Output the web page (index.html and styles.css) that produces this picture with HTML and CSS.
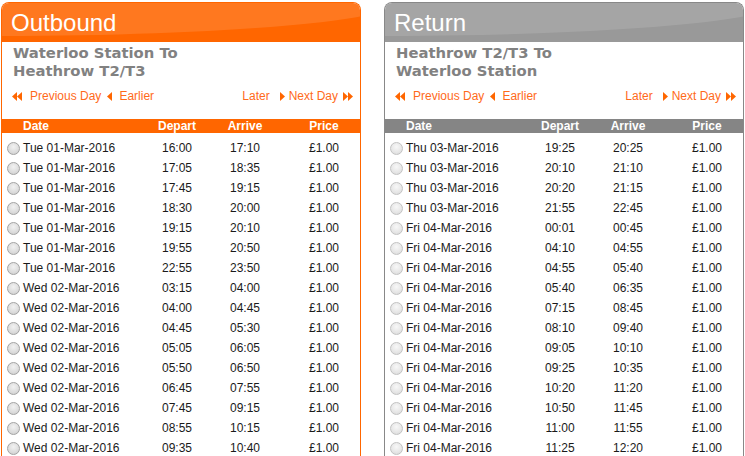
FILE: index.html
```html
<!DOCTYPE html>
<html>
<head>
<meta charset="utf-8">
<link rel="stylesheet" href="styles.css">
</head>
<body>
<div class="page">
  <section class="panel panel-out">
    <div class="head"><h2 class="title">Outbound</h2></div>
    <h3 class="route">Waterloo Station To<br>Heathrow T2/T3</h3>
    <div class="nav">
      <div class="nav-group">
        <svg class="ico dbl" viewBox="0 0 10 9"><polygon points="5,0 0,4.5 5,9"/><polygon points="10,0 5,4.5 10,9"/></svg>
        <a class="lnk">Previous Day</a>
        <svg class="ico sgl ml6" viewBox="0 0 5 9"><polygon points="5,0 0,4.5 5,9"/></svg>
        <a class="lnk">Earlier</a>
      </div>
      <div class="nav-group">
        <a class="lnk mr10">Later</a>
        <svg class="ico sgl" viewBox="0 0 5 9"><polygon points="0,0 5,4.5 0,9"/></svg>
        <a class="lnk">Next Day</a>
        <svg class="ico dbl ml5" viewBox="0 0 10 9"><polygon points="0,0 5,4.5 0,9"/><polygon points="5,0 10,4.5 5,9"/></svg>
      </div>
    </div>
    <div class="row thead"><span class="c-date">Date</span><span class="c-mid">Depart</span><span class="c-mid">Arrive</span><span class="c-price">Price</span></div>
    <div class="rows">
      <div class="row"><span class="c-date"><i class="radio"></i>Tue 01-Mar-2016</span><span class="c-mid">16:00</span><span class="c-mid">17:10</span><span class="c-price">£1.00</span></div>
      <div class="row"><span class="c-date"><i class="radio"></i>Tue 01-Mar-2016</span><span class="c-mid">17:05</span><span class="c-mid">18:35</span><span class="c-price">£1.00</span></div>
      <div class="row"><span class="c-date"><i class="radio"></i>Tue 01-Mar-2016</span><span class="c-mid">17:45</span><span class="c-mid">19:15</span><span class="c-price">£1.00</span></div>
      <div class="row"><span class="c-date"><i class="radio"></i>Tue 01-Mar-2016</span><span class="c-mid">18:30</span><span class="c-mid">20:00</span><span class="c-price">£1.00</span></div>
      <div class="row"><span class="c-date"><i class="radio"></i>Tue 01-Mar-2016</span><span class="c-mid">19:15</span><span class="c-mid">20:10</span><span class="c-price">£1.00</span></div>
      <div class="row"><span class="c-date"><i class="radio"></i>Tue 01-Mar-2016</span><span class="c-mid">19:55</span><span class="c-mid">20:50</span><span class="c-price">£1.00</span></div>
      <div class="row"><span class="c-date"><i class="radio"></i>Tue 01-Mar-2016</span><span class="c-mid">22:55</span><span class="c-mid">23:50</span><span class="c-price">£1.00</span></div>
      <div class="row"><span class="c-date"><i class="radio"></i>Wed 02-Mar-2016</span><span class="c-mid">03:15</span><span class="c-mid">04:00</span><span class="c-price">£1.00</span></div>
      <div class="row"><span class="c-date"><i class="radio"></i>Wed 02-Mar-2016</span><span class="c-mid">04:00</span><span class="c-mid">04:45</span><span class="c-price">£1.00</span></div>
      <div class="row"><span class="c-date"><i class="radio"></i>Wed 02-Mar-2016</span><span class="c-mid">04:45</span><span class="c-mid">05:30</span><span class="c-price">£1.00</span></div>
      <div class="row"><span class="c-date"><i class="radio"></i>Wed 02-Mar-2016</span><span class="c-mid">05:05</span><span class="c-mid">06:05</span><span class="c-price">£1.00</span></div>
      <div class="row"><span class="c-date"><i class="radio"></i>Wed 02-Mar-2016</span><span class="c-mid">05:50</span><span class="c-mid">06:50</span><span class="c-price">£1.00</span></div>
      <div class="row"><span class="c-date"><i class="radio"></i>Wed 02-Mar-2016</span><span class="c-mid">06:45</span><span class="c-mid">07:55</span><span class="c-price">£1.00</span></div>
      <div class="row"><span class="c-date"><i class="radio"></i>Wed 02-Mar-2016</span><span class="c-mid">07:45</span><span class="c-mid">09:15</span><span class="c-price">£1.00</span></div>
      <div class="row"><span class="c-date"><i class="radio"></i>Wed 02-Mar-2016</span><span class="c-mid">08:55</span><span class="c-mid">10:15</span><span class="c-price">£1.00</span></div>
      <div class="row"><span class="c-date"><i class="radio"></i>Wed 02-Mar-2016</span><span class="c-mid">09:35</span><span class="c-mid">10:40</span><span class="c-price">£1.00</span></div>
    </div>
  </section>

  <section class="panel panel-ret">
    <div class="head"><h2 class="title">Return</h2></div>
    <h3 class="route">Heathrow T2/T3 To<br>Waterloo Station</h3>
    <div class="nav">
      <div class="nav-group">
        <svg class="ico dbl" viewBox="0 0 10 9"><polygon points="5,0 0,4.5 5,9"/><polygon points="10,0 5,4.5 10,9"/></svg>
        <a class="lnk">Previous Day</a>
        <svg class="ico sgl ml6" viewBox="0 0 5 9"><polygon points="5,0 0,4.5 5,9"/></svg>
        <a class="lnk">Earlier</a>
      </div>
      <div class="nav-group">
        <a class="lnk mr10">Later</a>
        <svg class="ico sgl" viewBox="0 0 5 9"><polygon points="0,0 5,4.5 0,9"/></svg>
        <a class="lnk">Next Day</a>
        <svg class="ico dbl ml5" viewBox="0 0 10 9"><polygon points="0,0 5,4.5 0,9"/><polygon points="5,0 10,4.5 5,9"/></svg>
      </div>
    </div>
    <div class="row thead"><span class="c-date">Date</span><span class="c-mid">Depart</span><span class="c-mid">Arrive</span><span class="c-price">Price</span></div>
    <div class="rows">
      <div class="row"><span class="c-date"><i class="radio"></i>Thu 03-Mar-2016</span><span class="c-mid">19:25</span><span class="c-mid">20:25</span><span class="c-price">£1.00</span></div>
      <div class="row"><span class="c-date"><i class="radio"></i>Thu 03-Mar-2016</span><span class="c-mid">20:10</span><span class="c-mid">21:10</span><span class="c-price">£1.00</span></div>
      <div class="row"><span class="c-date"><i class="radio"></i>Thu 03-Mar-2016</span><span class="c-mid">20:20</span><span class="c-mid">21:15</span><span class="c-price">£1.00</span></div>
      <div class="row"><span class="c-date"><i class="radio"></i>Thu 03-Mar-2016</span><span class="c-mid">21:55</span><span class="c-mid">22:45</span><span class="c-price">£1.00</span></div>
      <div class="row"><span class="c-date"><i class="radio"></i>Fri 04-Mar-2016</span><span class="c-mid">00:01</span><span class="c-mid">00:45</span><span class="c-price">£1.00</span></div>
      <div class="row"><span class="c-date"><i class="radio"></i>Fri 04-Mar-2016</span><span class="c-mid">04:10</span><span class="c-mid">04:55</span><span class="c-price">£1.00</span></div>
      <div class="row"><span class="c-date"><i class="radio"></i>Fri 04-Mar-2016</span><span class="c-mid">04:55</span><span class="c-mid">05:40</span><span class="c-price">£1.00</span></div>
      <div class="row"><span class="c-date"><i class="radio"></i>Fri 04-Mar-2016</span><span class="c-mid">05:40</span><span class="c-mid">06:35</span><span class="c-price">£1.00</span></div>
      <div class="row"><span class="c-date"><i class="radio"></i>Fri 04-Mar-2016</span><span class="c-mid">07:15</span><span class="c-mid">08:45</span><span class="c-price">£1.00</span></div>
      <div class="row"><span class="c-date"><i class="radio"></i>Fri 04-Mar-2016</span><span class="c-mid">08:10</span><span class="c-mid">09:40</span><span class="c-price">£1.00</span></div>
      <div class="row"><span class="c-date"><i class="radio"></i>Fri 04-Mar-2016</span><span class="c-mid">09:05</span><span class="c-mid">10:10</span><span class="c-price">£1.00</span></div>
      <div class="row"><span class="c-date"><i class="radio"></i>Fri 04-Mar-2016</span><span class="c-mid">09:25</span><span class="c-mid">10:35</span><span class="c-price">£1.00</span></div>
      <div class="row"><span class="c-date"><i class="radio"></i>Fri 04-Mar-2016</span><span class="c-mid">10:20</span><span class="c-mid">11:20</span><span class="c-price">£1.00</span></div>
      <div class="row"><span class="c-date"><i class="radio"></i>Fri 04-Mar-2016</span><span class="c-mid">10:50</span><span class="c-mid">11:45</span><span class="c-price">£1.00</span></div>
      <div class="row"><span class="c-date"><i class="radio"></i>Fri 04-Mar-2016</span><span class="c-mid">11:00</span><span class="c-mid">11:55</span><span class="c-price">£1.00</span></div>
      <div class="row"><span class="c-date"><i class="radio"></i>Fri 04-Mar-2016</span><span class="c-mid">11:25</span><span class="c-mid">12:20</span><span class="c-price">£1.00</span></div>
    </div>
  </section>
</div>
</body>
</html>
```

FILE: styles.css
```css
html, body {
  margin: 0;
  padding: 0;
  background: #fff;
  overflow: hidden;
  height: 456px;
}
body {
  font-family: "Liberation Sans", Arial, sans-serif;
  font-size: 12px;
  color: #1a1a1a;
}
.page {
  display: flex;
  gap: 23px;
  padding: 2px 0 0 1px;
  align-items: flex-start;
}
.panel {
  width: 360px;
  box-sizing: border-box;
  border: 1px solid #ff6600;
  border-bottom: 0;
  border-radius: 8px 8px 0 0;
  overflow: hidden;
  flex: none;
}
.panel-ret {
  border-color: #888;
}
.head {
  position: relative;
  height: 39px;
  background: #ff6600;
  overflow: hidden;
}
.panel-ret .head {
  background: #999;
}
.head::before {
  content: "";
  position: absolute;
  left: -400px;
  top: -37px;
  width: 800px;
  height: 70px;
  border-radius: 50%;
  background: rgba(255, 255, 255, 0.12);
}
.title {
  position: relative;
  margin: 0;
  padding: 1px 0 0 9px;
  font-family: "Liberation Sans", Arial, sans-serif;
  font-weight: normal;
  font-size: 24px;
  line-height: 38px;
  color: #fff;
}
.route {
  margin: 0;
  padding: 2px 0 0 11px;
  font-family: "DejaVu Sans", Verdana, sans-serif;
  font-weight: bold;
  font-size: 14.8px;
  line-height: 18px;
  color: #818181;
}
.nav {
  display: flex;
  justify-content: space-between;
  align-items: center;
  padding: 9px 7px 0 10px;
  height: 14px;
}
.nav-group {
  display: flex;
  align-items: center;
}
.lnk {
  color: #ff6a1a;
  font-size: 12px;
  line-height: 14px;
}
.ico {
  display: block;
  height: 9px;
  fill: #ff6600;
}
.ico.dbl {
  width: 10px;
  margin-right: 8px;
}
.ico.sgl {
  width: 5px;
  margin-right: 7px;
}
.ml6 { margin-left: 6px; }
.ml5 { margin-left: 5px; margin-right: 0 !important; }
.mr10 { margin-right: 10px; }
.nav-group:last-child .ico.sgl { margin-right: 4px; }

.row {
  display: grid;
  grid-template-columns: 141px 68px 68px 1fr;
  align-items: center;
  height: 20px;
  line-height: 20px;
}
.thead {
  margin-top: 16px;
  height: 14px;
  line-height: 14px;
  background: #ff6600;
  color: #fff;
  font-weight: bold;
}
.panel-ret .thead {
  background: #858585;
}
.thead .c-date {
  padding-left: 21px;
}
.rows {
  padding-top: 5px;
  height: 320px;
}
.c-date {
  display: flex;
  align-items: center;
  white-space: nowrap;
}
.c-mid {
  text-align: center;
}
.c-price {
  text-align: center;
  padding-left: 11px;
  padding-right: 2px;
}
.radio {
  display: block;
  width: 11px;
  height: 11px;
  margin: 0 3px 0 5px;
  border: 1px solid #a3a3a3;
  border-radius: 50%;
  background: radial-gradient(circle at 50% 35%, #f2f2f2 0%, #dcdcdc 60%, #c9c9c9 100%);
}
.panel-ret .radio {
  border-color: #c2c2c2;
  background: radial-gradient(circle at 50% 35%, #f8f8f8 0%, #e6e6e6 60%, #d6d6d6 100%);
}
```
